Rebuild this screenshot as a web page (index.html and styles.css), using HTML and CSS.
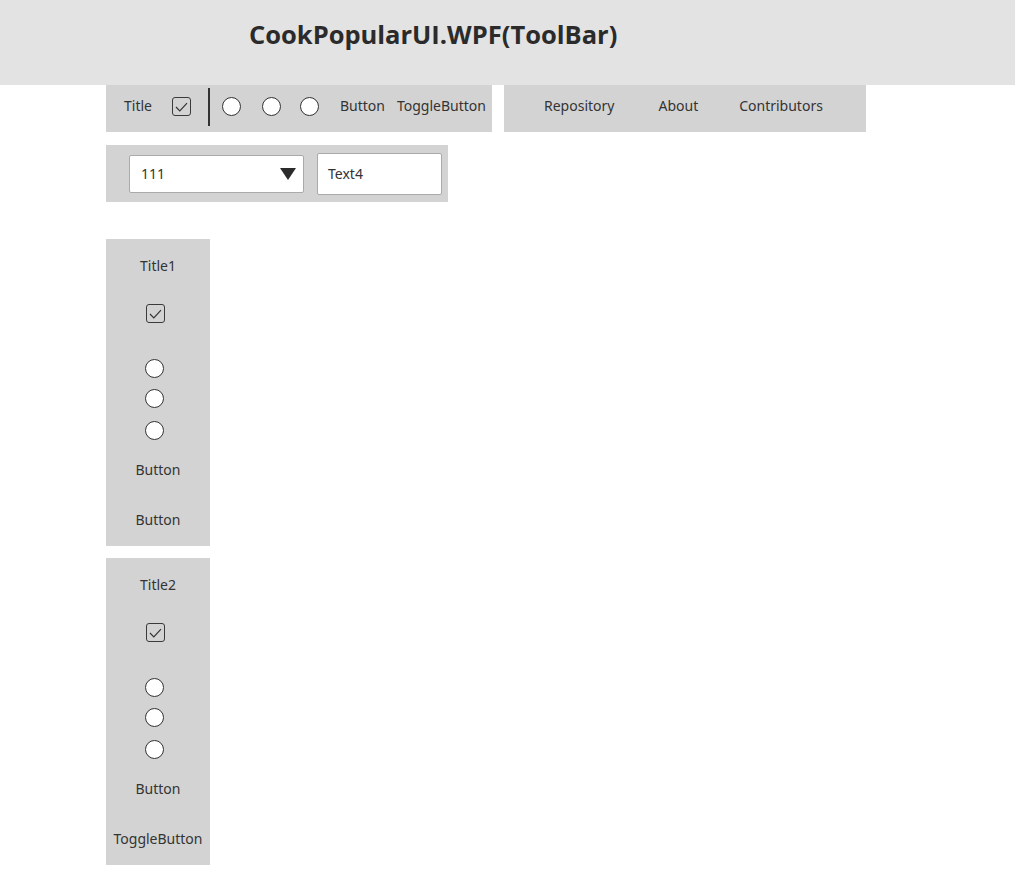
FILE: index.html
```html
<!DOCTYPE html>
<html>
<head>
<meta charset="utf-8">
<link rel="stylesheet" href="styles.css">
</head>
<body>
<header class="header"><h1 class="title">CookPopularUI.WPF(ToolBar)</h1></header>
<main class="content">
  <div class="row">
    <div class="bar bar1">
      <span class="lbl t-title">Title</span>
      <span class="check"><svg width="13" height="10" viewBox="0 0 13 10"><path d="M1 5 L4.8 8.8 L12 1.2" fill="none" stroke="#333" stroke-width="1.2"/></svg></span>
      <span class="sep"></span>
      <span class="radio r1"></span>
      <span class="radio r2"></span>
      <span class="radio r3"></span>
      <span class="lbl t-btn">Button</span>
      <span class="lbl t-tog">ToggleButton</span>
    </div>
    <div class="bar bar2">
      <span class="lbl n-repo">Repository</span>
      <span class="lbl n-about">About</span>
      <span class="lbl n-contrib">Contributors</span>
    </div>
  </div>
  <div class="bar bar3">
    <div class="combo"><span class="lbl">111</span><span class="tri"></span></div>
    <div class="textbox"><span class="lbl">Text4</span></div>
  </div>
  <div class="vbar vbar1">
    <span class="lbl v-title">Title1</span>
    <span class="check v-check"><svg width="13" height="10" viewBox="0 0 13 10"><path d="M1 5 L4.8 8.8 L12 1.2" fill="none" stroke="#333" stroke-width="1.2"/></svg></span>
    <span class="radio v-r1"></span>
    <span class="radio v-r2"></span>
    <span class="radio v-r3"></span>
    <span class="lbl v-btn">Button</span>
    <span class="lbl v-btn2">Button</span>
  </div>
  <div class="vbar vbar2">
    <span class="lbl v-title">Title2</span>
    <span class="check v-check"><svg width="13" height="10" viewBox="0 0 13 10"><path d="M1 5 L4.8 8.8 L12 1.2" fill="none" stroke="#333" stroke-width="1.2"/></svg></span>
    <span class="radio v-r1"></span>
    <span class="radio v-r2"></span>
    <span class="radio v-r3"></span>
    <span class="lbl v-btn">Button</span>
    <span class="lbl v-btn2">ToggleButton</span>
  </div>
</main>
</body>
</html>
```
FILE: styles.css
```css
* { box-sizing: border-box; }
html, body { margin: 0; padding: 0; background: #fff; }
body { font-family: "Noto Sans", "Open Sans", sans-serif; color: #333; font-size: 14px; }
.header { height: 85px; background: #e3e3e3; display: flex; align-items: flex-start; }
.title { margin: 17px 0 0 249px; font-family: "Open Sans", sans-serif; font-weight: 700; font-size: 25.5px; line-height: 34px; color: #2b2b2b; letter-spacing: 0; }
.content { padding-left: 106px; display: flex; flex-direction: column; align-items: flex-start; }
.row { display: flex; gap: 12px; }
.lbl { font-size: 14px; line-height: 20px; color: #333; white-space: nowrap; }
.bar { background: #d3d3d3; display: flex; align-items: center; }
.bar1 { width: 386px; height: 47px; padding-left: 18px; padding-bottom: 4px; }
.bar1 .lbl, .bar2 .lbl { margin-bottom: 2px; }
.bar2 { width: 362px; height: 47px; padding-left: 40px; padding-bottom: 4px; }
.check { width: 19px; height: 19px; border: 1px solid #3a3a3a; border-radius: 3px; display: flex; align-items: center; justify-content: center; flex: none; }
.sep { width: 2px; height: 38px; background: #333; margin-left: 17px; flex: none; }
.radio { width: 19px; height: 19px; border: 1px solid #333; border-radius: 50%; background: #fff; flex: none; }
.t-title { margin-right: 20px; }
.r1 { margin-left: 12px; }
.r2 { margin-left: 21px; }
.r3 { margin-left: 19px; }
.t-btn { margin-left: 21px; }
.t-tog { margin-left: 12px; }
.n-about { margin-left: 44px; }
.n-contrib { margin-left: 41px; }
.bar3 { margin-top: 13px; width: 342px; height: 57px; padding-left: 23px; }
.combo { width: 175px; height: 38px; background: #fff; border: 1px solid #aaa; border-radius: 2px; display: flex; align-items: center; padding-left: 11px; padding-right: 7px; justify-content: space-between; }
.tri { width: 0; height: 0; border-left: 8px solid transparent; border-right: 8px solid transparent; border-top: 12px solid #2b2b2b; }
.textbox { margin-left: 13px; width: 125px; height: 42px; background: #fff; border: 1px solid #aaa; border-radius: 2px; display: flex; align-items: center; padding-left: 10px; }
.vbar { background: #d3d3d3; width: 104px; height: 307px; display: flex; flex-direction: column; align-items: center; }
.vbar1 { margin-top: 37px; }
.vbar2 { margin-top: 12px; }
.v-title { margin-top: 17px; }
.v-check { margin-top: 28px; margin-right: 6px; }
.radio.v-r1, .radio.v-r2, .radio.v-r3 { margin-right: 8px; }
.v-r1 { margin-top: 36px; }
.v-r2 { margin-top: 11px; }
.v-r3 { margin-top: 13px; }
.v-btn { margin-top: 20px; }
.v-btn2 { margin-top: 30px; }
```
